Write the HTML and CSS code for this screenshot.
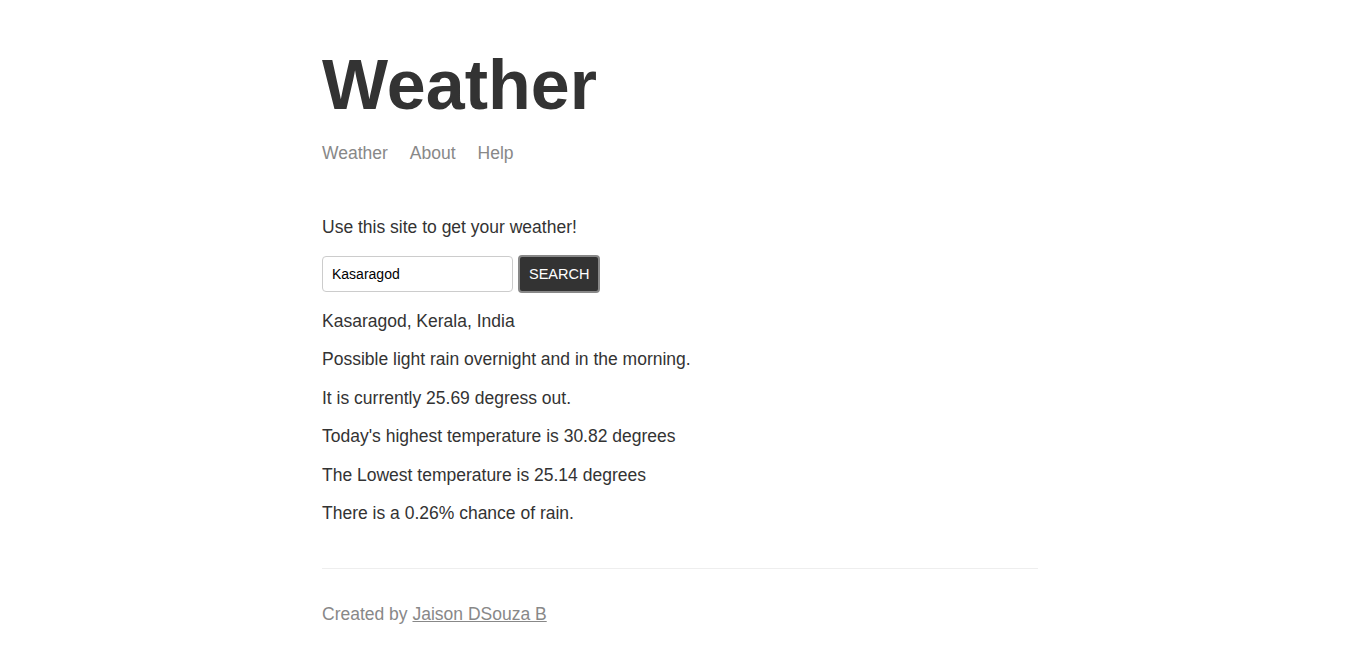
FILE: index.html
```html
<!DOCTYPE html>
<html lang="en">
<head>
<meta charset="utf-8">
<title>Weather</title>
<link rel="stylesheet" href="styles.css">
</head>
<body>
<div class="main-content">
  <header class="header">
    <h1 class="title">Weather</h1>
    <nav class="nav">
      <a href="#" class="nav-link">Weather</a>
      <a href="#" class="nav-link">About</a>
      <a href="#" class="nav-link">Help</a>
    </nav>
  </header>
  <p class="intro">Use this site to get your weather!</p>
  <form class="search-form">
    <input class="search-input" type="text" value="Kasaragod">
    <button class="search-button" type="button">SEARCH</button>
  </form>
  <div class="results">
    <p class="result">Kasaragod, Kerala, India</p>
    <p class="result">Possible light rain overnight and in the morning.</p>
    <p class="result">It is currently 25.69 degress out.</p>
    <p class="result">Today's highest temperature is 30.82 degrees</p>
    <p class="result">The Lowest temperature is 25.14 degrees</p>
    <p class="result">There is a 0.26% chance of rain.</p>
  </div>
  <footer class="footer">
    <p class="footer-text">Created by <a href="#" class="footer-link">Jaison DSouza B</a></p>
  </footer>
</div>
</body>
</html>
```
FILE: styles.css
```css
html, body {
  margin: 0;
  padding: 0;
  background: #ffffff;
}
body {
  font-family: "Liberation Sans", Arial, sans-serif;
  color: #333333;
  font-size: 17.5px;
}
.main-content {
  width: 716px;
  margin: 0 auto;
}
.header {
  padding-top: 40px;
}
.title {
  font-size: 70px;
  font-weight: bold;
  margin: 0;
  line-height: 90px;
  color: #333333;
}
.nav {
  display: flex;
  gap: 22px;
  margin-top: 13px;
}
.nav-link {
  color: #888888;
  text-decoration: none;
  font-size: 17.5px;
}
.intro {
  margin: 51px 0 16px;
  line-height: 24px;
}
.search-form {
  display: flex;
  align-items: center;
  gap: 5px;
}
.search-input {
  box-sizing: border-box;
  width: 191px;
  height: 36px;
  border: 1px solid #cccccc;
  border-radius: 4px;
  padding: 0 9px;
  font-family: "Liberation Sans", Arial, sans-serif;
  font-size: 14px;
  color: #000000;
}
.search-button {
  box-sizing: border-box;
  height: 38px;
  padding: 0 9px;
  background: #333333;
  color: #ffffff;
  border: 2px solid #888888;
  border-radius: 4px;
  font-family: "Liberation Sans", Arial, sans-serif;
  font-size: 14.5px;
}
.results {
  margin-top: 16px;
}
.result {
  margin: 0 0 14.4px;
  line-height: 24px;
}
.footer {
  margin-top: 43px;
  border-top: 1px solid #eeeeee;
  padding-top: 33px;
}
.footer-text {
  margin: 0;
  color: #888888;
  line-height: 24px;
}
.footer-link {
  color: #888888;
}
```
